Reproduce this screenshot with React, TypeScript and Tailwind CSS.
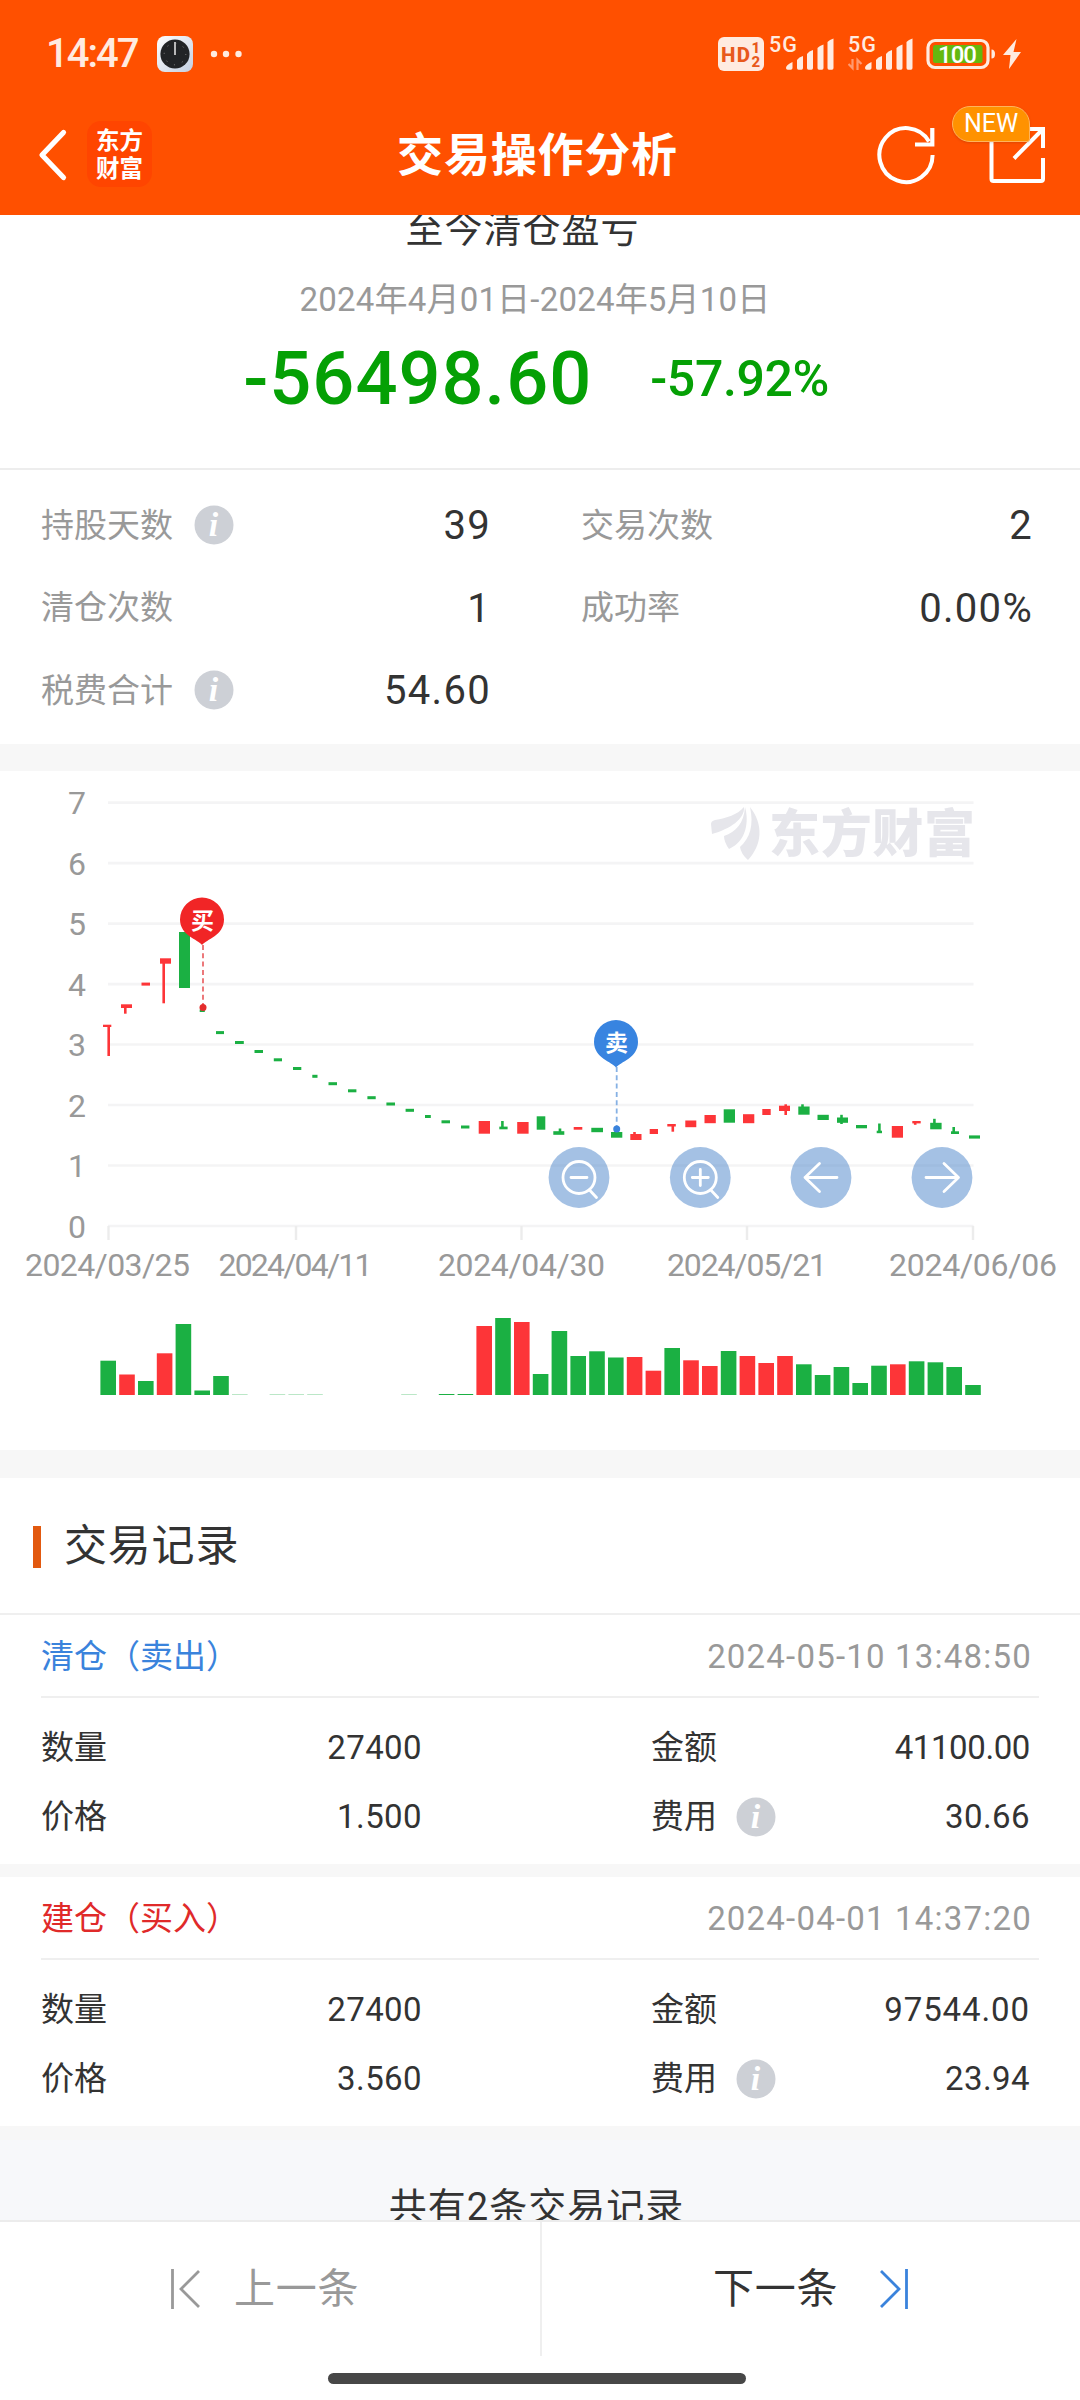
import type { ReactNode } from "react";

const RED = "#fd3538";
const GREEN = "#1bb043";
const BLUE = "#3a83dc";
const STATUS = "#ffebe0";

// [color, left, right, top, bottom, wickX?, wickTop?, wickBottom?]
type Candle = [string, number, number, number, number, number?, number?, number?];

const candles: Candle[] = [
  [RED, 103, 111.3, 1024.7, 1027, 108.7, 1025, 1056],
  [RED, 121, 132, 1004.3, 1008, 125.3, 1005, 1013.7],
  [RED, 141.5, 150, 982.6, 985.6],
  [RED, 160, 171, 958.3, 963.7, 163.7, 959, 1003.3],
  [GREEN, 179, 190, 932, 988],
  [GREEN, 199.7, 204.8, 1009.5, 1012],
  [GREEN, 216, 224, 1031.1, 1034.1],
  [GREEN, 235, 243.8, 1041, 1044],
  [GREEN, 254.5, 263, 1050, 1053],
  [GREEN, 273.8, 282, 1058.3, 1061.3],
  [GREEN, 293, 301.3, 1067, 1070],
  [GREEN, 312.3, 317.5, 1074.8, 1077.8],
  [GREEN, 328.5, 337, 1082.2, 1085.2],
  [GREEN, 348, 356.4, 1089.3, 1092.3],
  [GREEN, 367.4, 375.7, 1096.2, 1099.2],
  [GREEN, 386.4, 395, 1102.5, 1105.5],
  [GREEN, 405.6, 414, 1108.8, 1111.8],
  [GREEN, 425, 430.8, 1115, 1118],
  [GREEN, 441.5, 450, 1120.3, 1123.3],
  [GREEN, 461, 469.4, 1125.5, 1128.5],
  [RED, 478.7, 490, 1121, 1133.7],
  [GREEN, 499.3, 507.6, 1126.6, 1129.3, 502.4, 1121, 1128],
  [RED, 517.2, 528.6, 1122, 1133.7],
  [GREEN, 536.7, 545.3, 1116.3, 1129.7],
  [GREEN, 553.3, 564.3, 1131.2, 1134.8, 560, 1128.5, 1133],
  [RED, 573.7, 582.3, 1127, 1129.7],
  [GREEN, 591.3, 603, 1127.8, 1132.2],
  [GREEN, 611, 622.3, 1132, 1137.7],
  [RED, 630.3, 641.5, 1134, 1140, 634.5, 1132, 1136],
  [RED, 649.7, 658, 1129, 1134],
  [RED, 667.3, 675.8, 1124, 1126.5, 672.8, 1125, 1131.7],
  [RED, 685.3, 696.3, 1120.5, 1127.2],
  [RED, 704.5, 715.8, 1115, 1123.2],
  [GREEN, 723.7, 735, 1109.3, 1122.7],
  [RED, 743, 754.3, 1114.2, 1123.2],
  [RED, 762.3, 770.7, 1109, 1115],
  [RED, 779, 790, 1105.7, 1111, 785.7, 1104.3, 1115],
  [GREEN, 798.3, 809.6, 1106.5, 1114.7, 802.5, 1104.3, 1108],
  [GREEN, 817.5, 828.8, 1114.8, 1120],
  [GREEN, 837, 848, 1117.5, 1122.8, 841.5, 1114.8, 1124],
  [GREEN, 856, 867, 1125, 1128.3],
  [GREEN, 876.7, 882, 1130.7, 1133.2, 879.4, 1123.5, 1132],
  [RED, 891.8, 903, 1126, 1137.7],
  [RED, 912.3, 920.7, 1121, 1123.4, 915.2, 1122, 1124.8],
  [GREEN, 930.2, 941.6, 1122.8, 1129.3, 934.4, 1118.8, 1124],
  [GREEN, 951, 959, 1131.3, 1134, 953.7, 1127, 1133],
  [GREEN, 969, 980, 1135.4, 1138.6],
];

const volumes: [number, string][] = [
  [34.3, GREEN], [20.5, RED], [14, GREEN], [41.7, RED], [71, GREEN], [4.5, GREEN], [19, GREEN],
  [0.3, GREEN], [0, GREEN], [0.3, GREEN], [0.3, GREEN], [0.3, GREEN], [0, GREEN], [0, GREEN],
  [0, GREEN], [0, GREEN], [0.3, GREEN], [0, GREEN], [1, GREEN], [1, GREEN], [69, RED],
  [77, GREEN], [73, RED], [21, GREEN], [64, GREEN], [39, GREEN], [43.7, GREEN], [37.5, GREEN],
  [38, RED], [24.3, RED], [47, GREEN], [34.7, RED], [29, RED], [44, GREEN], [39, RED],
  [32, RED], [39, RED], [30.7, GREEN], [20, GREEN], [28, GREEN], [12, GREEN], [29.3, GREEN],
  [30.7, RED], [33.7, GREEN], [32.7, GREEN], [28, GREEN], [10, GREEN],
];

const priceTicks = [7, 6, 5, 4, 3, 2, 1, 0];

const dateTicks = [
  { x: 108.5, label: "2024/03/25", left: 25, width: 165 },
  { x: 296, label: "2024/04/11", left: 218.5, width: 154 },
  { x: 521.5, label: "2024/04/30", left: 438, width: 167 },
  { x: 747, label: "2024/05/21", left: 667, width: 160 },
  { x: 973, label: "2024/06/06", left: 889, width: 168 },
];

const records = [
  {
    title: "清仓（卖出）",
    color: "text-[#3a83dc]",
    time: "2024-05-10 13:48:50",
    timeSpacing: "tracking-[1.2px]",
    quantity: "27400",
    amount: "41100.00",
    amountSpacing: "tracking-[-0.4px]",
    price: "1.500",
    fee: "30.66",
  },
  {
    title: "建仓（买入）",
    color: "text-[#e02a2a]",
    time: "2024-04-01 14:37:20",
    timeSpacing: "tracking-[1.2px]",
    quantity: "27400",
    amount: "97544.00",
    amountSpacing: "tracking-[0.9px]",
    price: "3.560",
    fee: "23.94",
  },
];

function InfoIcon() {
  return (
    <svg width="40" height="40" viewBox="0 0 40 40" className="shrink-0">
      <circle cx="20" cy="20" r="19.5" fill="#cdd0d6" />
      <text
        x="19.5"
        y="31"
        fontSize="34"
        fontStyle="italic"
        fontWeight="700"
        fill="#fff"
        textAnchor="middle"
        className="font-['Liberation_Serif',serif]"
      >
        i
      </text>
    </svg>
  );
}

function SignalBars({ data }: { data?: boolean }) {
  return (
    <svg width="67" height="56" viewBox="0 -10 67 56">
      <text x="0" y="15.5" fontSize="21.5" fontWeight="500" fill={STATUS} textLength="28">
        5G
      </text>
      {data && (
        <path d="M4.5 23v9l-4-4M9.5 34v-10l4 4" fill="none" stroke="#ff9a70" strokeWidth="2.2" />
      )}
      <path
        fill={STATUS}
        d="M17 32q0-3 6.5-6v6q0 1.7-1.7 1.7h-3.100q-1.700 0-1.700-1.700zM28 24q2-3 6-4v12q0 1.700-1.500 1.700h-3q-1.500 0-1.500-1.700zM38 18q2-3 6-4v18q0 1.700-1.500 1.700h-3q-1.500 0-1.500-1.700zM48.500 12q2-2.500 6-3.500v23.500q0 1.700-1.500 1.700h-3q-1.500 0-1.500-1.700zM58.500 6q2-2.500 6-3.500v29.500q0 1.700-1.500 1.700h-3q-1.500 0-1.500-1.700z"
      />
    </svg>
  );
}

function StatusBar() {
  return (
    <div className="flex h-[108px] items-center justify-between pr-[58px] pl-[46px]">
      <div className="flex items-center">
        <span className="w-[111px] text-[40px] font-medium tracking-[-2px] text-[#ffebe0]">14:47</span>
        <svg width="36" height="36" viewBox="0 0 36 36">
          <defs>
            <linearGradient id="tile" x1="0" y1="0" x2="1" y2="1">
              <stop offset="0" stopColor="#ffffff" />
              <stop offset="1" stopColor="#c3cfe0" />
            </linearGradient>
          </defs>
          <rect width="36" height="36" rx="8" fill="url(#tile)" />
          <circle cx="18" cy="18" r="14.6" fill="#222426" />
          <circle cx="18" cy="18" r="10.8" fill="none" stroke="#8a8a8a" strokeWidth="1" strokeDasharray="1 7.48" />
          <path d="M18 6v13" stroke="#b8b8b8" strokeWidth="2" />
        </svg>
        <svg width="32" height="8" viewBox="0 0 32 8" className="ml-[17px]">
          <circle cx="4" cy="4" r="3.2" fill={STATUS} />
          <circle cx="16" cy="4" r="3.2" fill={STATUS} />
          <circle cx="28.5" cy="4" r="3.2" fill={STATUS} />
        </svg>
      </div>
      <div className="flex items-center">
        <svg width="46" height="34" viewBox="0 0 46 34" className="mr-[5px]">
          <rect width="46" height="34" rx="6" fill={STATUS} />
          <text x="3" y="24.5" fontSize="20.5" fontWeight="800" fill="#e8591c" textLength="29">
            HD
          </text>
          <text x="33.5" y="15.5" fontSize="15" fontWeight="800" fill="#e8591c">
            1
          </text>
          <text x="33.5" y="30" fontSize="15" fontWeight="800" fill="#e8591c">
            2
          </text>
        </svg>
        <SignalBars />
        <div className="ml-[12px]">
          <SignalBars data />
        </div>
        <svg width="96" height="32" viewBox="0 0 96 32" className="ml-[11px]">
          <rect x="2" y="2.5" width="60" height="27" rx="7" fill="none" stroke={STATUS} strokeWidth="3.2" />
          <rect x="7" y="7" width="49.5" height="18" rx="2.5" fill="#64b80f" />
          <text x="12" y="24.5" fontSize="24" fontWeight="500" fill="#fff" textLength="39">
            100
          </text>
          <path d="M65.5 11.500q3.500 0 3.500 4.500t-3.500 4.500z" fill={STATUS} />
          <path d="M90.500 1 77 17h7.500l-1.500 14L95 14h-7.500z" fill={STATUS} />
        </svg>
      </div>
    </div>
  );
}

function NavBar() {
  return (
    <div className="flex h-[107px] items-start justify-between pr-[34px] pl-[38px]">
      <div className="flex w-[316px] pt-[13px]">
        <svg width="30" height="66" viewBox="0 0 30 66">
          <path
            d="M25.5 11.500 4 34l21.500 22.500"
            fill="none"
            stroke="#fff"
            strokeWidth="5.2"
            strokeLinejoin="round"
            strokeLinecap="round"
          />
        </svg>
        <div className="ml-[19px] flex h-[66px] w-[65px] flex-col items-center justify-center rounded-[14px] bg-[#ff4500] pt-[2px] text-[23.5px] leading-[28px] font-bold text-white">
          <span>东方</span>
          <span>财富</span>
        </div>
      </div>
      <h1 className="pt-[13px] text-[46px] leading-[68px] font-bold tracking-[0.8px] text-white">交易操作分析</h1>
      <div className="relative flex w-[325px] justify-end pt-[13px]">
        <svg width="60" height="66" viewBox="0 0 60 66">
          <path d="M56.6 34a26.6 27 0 1 1-3.600-13.500" fill="none" stroke="#fff" strokeWidth="4" />
          <path d="M56.300 7v16.500H39" fill="none" stroke="#fff" strokeWidth="4.2" />
        </svg>
        <svg width="60" height="66" viewBox="0 0 60 66" className="ml-[50px]">
          <path
            d="M5.500 14v44q0 2 2 2h47.500q2 0 2-2V37M40 8h17v19M57 8 28 37.500"
            fill="none"
            stroke="#fff"
            strokeWidth="4"
          />
        </svg>
        <span className="absolute top-[-2px] right-[16px] flex h-[36px] w-[78px] items-center justify-center rounded-[18px] rounded-br-[3px] border border-[#ffb45c] bg-[#ff9200] text-[25px] text-white shadow-sm">
          NEW
        </span>
      </div>
    </div>
  );
}

function Stat({ label, value, info }: { label: string; value: string; info?: boolean }) {
  return (
    <div className="flex h-[82.5px] items-center">
      <span className="mr-[21px] text-[33px] text-[#999]">{label}</span>
      {info && <InfoIcon />}
      <span className="ml-auto pt-[2px] text-[40px] tracking-[1.3px] text-[#333]">{value}</span>
    </div>
  );
}

function Pin({ x, y, color, children }: { x: number; y: number; color: string; children: ReactNode }) {
  return (
    <g transform={`translate(${x} ${y})`}>
      <path d="M0 25.5C-4 20-22 16-22 0A22 22 0 0 1 22 0C22 16 4 20 0 25.5z" fill={color} />
      <text x="0.5" y="9" fontSize="23" fontWeight="700" fill="#fff" textAnchor="middle">
        {children}
      </text>
    </g>
  );
}

function ChartButton({ x, d }: { x: number; d: string }) {
  return (
    <g transform={`translate(${x} 1177.5)`}>
      <circle r="30.4" fill="#4983c9" fillOpacity="0.5" />
      <path d={d} fill="none" stroke="#fff" strokeWidth="2.8" strokeLinecap="round" strokeLinejoin="round" />
    </g>
  );
}

function Chart() {
  return (
    <svg width="1080" height="679" viewBox="0 771 1080 679" className="block">
      {/* Grid */}
      {priceTicks.map((tick) => {
        const y = 1226 - tick * 60.48;
        return (
          <g key={tick}>
            <path d={`M108 ${y}H973.5`} stroke="#f4f4f5" strokeWidth="2.6" />
            <text x="86" y={y + 11.5} fontSize="32" fill="#999" textAnchor="end">
              {tick}
            </text>
          </g>
        );
      })}
      {dateTicks.map((tick) => (
        <g key={tick.label}>
          <path d={`M${tick.x} 1226v14`} stroke="#ececec" strokeWidth="2.4" />
          <text x={tick.left} y="1275.5" fontSize="32" fill="#999" textLength={tick.width}>
            {tick.label}
          </text>
        </g>
      ))}
      {/* Watermark */}
      <g fill="#e6e6eb">
        <path d="M711 824q0-3 4-4c12-2 22-5 29-13 1 12-14 22-32 27z" />
        <path d="M745 807c4 14 2 34-16 42q-5-7-5-13c12-4 20-13 21-29z" />
        <path d="M750 807c14 18 12 38-2 53q-7-6-8-13c10-9 14-22 10-40z" />
        <text x="769" y="852" fontSize="51" fontWeight="900" textLength="206">
          东方财富
        </text>
      </g>
      {/* Candles */}
      {candles.map(([color, left, right, top, bottom, wick, wickTop, wickBottom]) => (
        <g key={left}>
          <rect x={left} y={top} width={right - left} height={bottom - top} fill={color} />
          {wick && <path d={`M${wick} ${wickTop}V${wickBottom}`} stroke={color} strokeWidth="2.6" />}
        </g>
      ))}
      {/* Trade markers */}
      <path d="M203 945v60" stroke="#e8585a" strokeWidth="1.6" strokeDasharray="5 3.3" />
      <circle cx="203" cy="1007.5" r="3.5" fill="#e42c2c" />
      <Pin x={202} y={919.5} color="#f12526">买</Pin>
      <path d="M616.7 1067v60" stroke="#86b1e4" strokeWidth="1.8" strokeDasharray="5 3.3" />
      <circle cx="616.7" cy="1129" r="3.5" fill={BLUE} />
      <Pin x={616} y={1042} color="#3884e0">卖</Pin>
      {/* Controls */}
      <ChartButton x={579} d="M16 0A16 16 0 1 1-16 0A16 16 0 1 1 16 0M-8 0H8M10.5 12.5 17.5 20" />
      <ChartButton x={700.3} d="M16 0A16 16 0 1 1-16 0A16 16 0 1 1 16 0M-8 0H8M0-8V8M10.5 12.5 17.5 20" />
      <ChartButton x={821} d="M16 0H-16M-1.5-14-16 0-1.5 14" />
      <ChartButton x={942} d="M-16 0H16M2-14 16.5 0 2 14" />
      {/* Volume */}
      {volumes.map(([height, color], i) => (
        <rect key={i} x={100.4 + i * 18.8} y={1395 - height} width="15.6" height={height} fill={color} />
      ))}
    </svg>
  );
}

function RecordCard({ record }: { record: (typeof records)[number] }) {
  return (
    <article className="h-[249px] bg-white px-[41px] text-[33px] text-[#333]">
      <div className="flex h-[83px] items-center justify-between border-b-2 border-[#efefef] pt-[2px] pr-[7px]">
        <span className={record.color}>{record.title}</span>
        <span className={`text-[#999] ${record.timeSpacing}`}>{record.time}</span>
      </div>
      <div className="grid grid-cols-[381px_379px] gap-x-[229px] pt-[15px] leading-[69px]">
        <div className="flex justify-between">
          <span>数量</span>
          <span className="tracking-[0.4px]">{record.quantity}</span>
        </div>
        <div className="flex justify-between">
          <span>金额</span>
          <span className={record.amountSpacing}>{record.amount}</span>
        </div>
        <div className="flex justify-between">
          <span>价格</span>
          <span className="tracking-[0.4px]">{record.price}</span>
        </div>
        <div className="flex items-center">
          <span className="mr-[19px]">费用</span>
          <InfoIcon />
          <span className="ml-auto tracking-[0.4px]">{record.fee}</span>
        </div>
      </div>
    </article>
  );
}

export default function App() {
  return (
    <div className="flex h-[2400px] w-[1080px] flex-col overflow-hidden bg-white font-[Roboto,'Noto_Sans_CJK_SC',sans-serif]">
      <header className="h-[215px] shrink-0 bg-[#ff5000]">
        <StatusBar />
        <NavBar />
      </header>

      <main className="h-[2005px] shrink-0 overflow-hidden bg-[#f7f7f7]">
        {/* Profit summary */}
        <section className="flex h-[255px] flex-col items-center border-b-2 border-[#ededed] bg-white">
          <h2 className="-mt-[14px] mr-[35px] text-[38px] leading-[56px] tracking-[1px] text-[#333]">至今清仓盈亏</h2>
          <p className="mt-[19px] mr-[10px] text-[33px] leading-[48px] tracking-[0.2px] text-[#999]">
            2024年4月01日-2024年5月10日
          </p>
          <div className="mt-[7px] mr-[8px] flex items-center gap-[58px] font-medium text-[#05a005]">
            <span className="text-[74px] leading-[96px] tracking-[1px]">-56498.60</span>
            <span className="text-[50px] leading-[96px] tracking-[-0.4px]">-57.92%</span>
          </div>
        </section>

        <section className="grid h-[274px] grid-cols-2 bg-white pt-[14px]">
          <div className="pr-[49px] pl-[41px]">
            <Stat label="持股天数" value="39" info />
            <Stat label="清仓次数" value="1" />
            <Stat label="税费合计" value="54.60" info />
          </div>
          <div className="pr-[47px] pl-[41px]">
            <Stat label="交易次数" value="2" />
            <Stat label="成功率" value="0.00%" />
          </div>
        </section>

        <section className="mt-[27px] h-[679px] bg-white">
          <Chart />
        </section>

        {/* Trade records */}
        <section className="mt-[28px]">
          <div className="flex h-[137px] items-center border-b-2 border-[#efefef] bg-white pt-[2px] pl-[33px]">
            <span className="h-[42px] w-[8px] bg-[#e2590f]" />
            <h3 className="ml-[23px] text-[43px] tracking-[0.8px] text-[#333]">交易记录</h3>
          </div>
          <div className="flex flex-col gap-[13px]">
            {records.map((record) => (
              <RecordCard key={record.time} record={record} />
            ))}
          </div>
        </section>
        <div className="mt-[14px] flex h-[140px] justify-center bg-[#f7f8fa] pt-[37px] pr-[7px] text-[38px] leading-[60px] tracking-[1px] text-[#333]">
          共有2条交易记录
        </div>
      </main>

      <footer className="flex h-[180px] shrink-0 flex-col items-center border-t-2 border-[#ececec] text-[41px] tracking-[0.8px]">
        <div className="grid h-[134px] w-full grid-cols-2">
          <div className="flex items-center pl-[170px] text-[#999]">
            <svg width="32" height="40" viewBox="0 0 32 40" className="mr-[32px]">
              <path d="M2.5 0v40M29 2 11 20l18 18" fill="none" stroke="#999" strokeWidth="2.8" />
            </svg>
            <span className="pt-[2px]">上一条</span>
          </div>
          <div className="flex items-center border-l-2 border-[#efefef] pl-[171px] text-[#333]">
            <span className="pt-[2px]">下一条</span>
            <svg width="32" height="40" viewBox="0 0 32 40" className="ml-[41px]">
              <path d="M2 2l18 18L2 38M27.5 0v40" fill="none" stroke={BLUE} strokeWidth="2.8" />
            </svg>
          </div>
        </div>
        <div className="mt-[17px] mr-[6px] h-[11px] w-[418px] rounded-full bg-[#474747]" />
      </footer>
    </div>
  );
}
